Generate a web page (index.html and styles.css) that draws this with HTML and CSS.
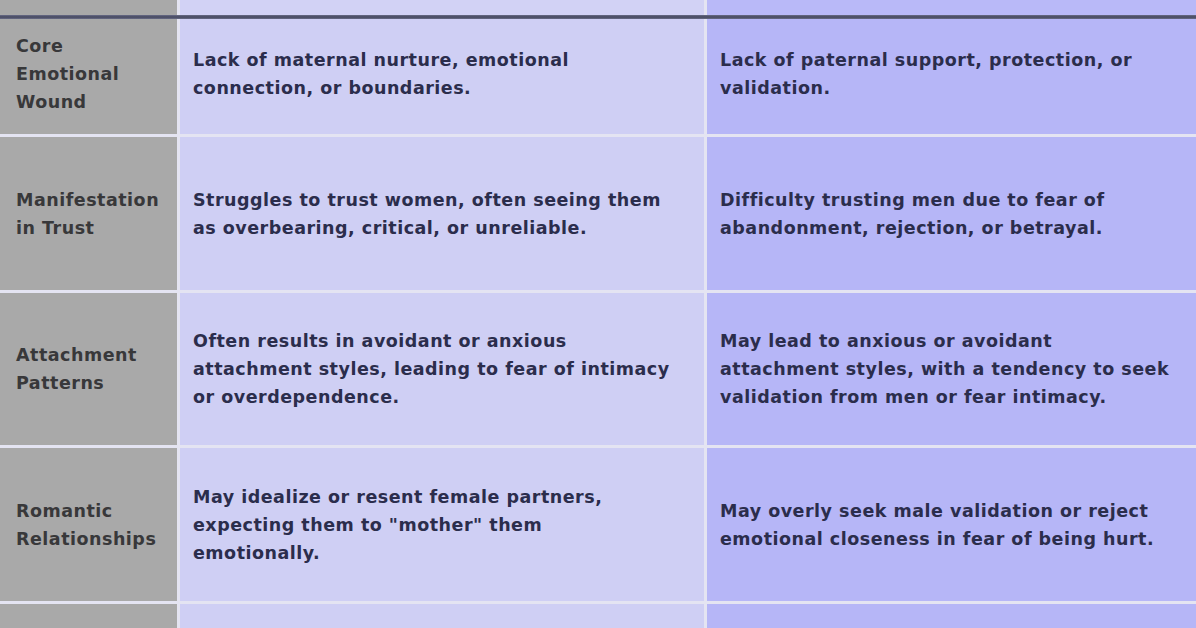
FILE: index.html
```html
<!DOCTYPE html>
<html lang="en">
<head>
<meta charset="utf-8">
<title>Mother and Father Wounds</title>
<link rel="stylesheet" href="styles.css">
</head>
<body>
<div class="table">
  <div class="row head">
    <div class="cell label"></div>
    <div class="cell mother"></div>
    <div class="cell father"></div>
  </div>
  <div class="rule"></div>
  <div class="body">
    <div class="row r1">
      <div class="cell label"><p>Core<br>Emotional<br>Wound</p></div>
      <div class="cell mother"><p>Lack of maternal nurture, emotional<br>connection, or boundaries.</p></div>
      <div class="cell father"><p>Lack of paternal support, protection, or<br>validation.</p></div>
    </div>
    <div class="row r2">
      <div class="cell label"><p>Manifestation<br>in Trust</p></div>
      <div class="cell mother"><p>Struggles to trust women, often seeing them<br>as overbearing, critical, or unreliable.</p></div>
      <div class="cell father"><p>Difficulty trusting men due to fear of<br>abandonment, rejection, or betrayal.</p></div>
    </div>
    <div class="row r3">
      <div class="cell label"><p>Attachment<br>Patterns</p></div>
      <div class="cell mother"><p>Often results in avoidant or anxious<br>attachment styles, leading to fear of intimacy<br>or overdependence.</p></div>
      <div class="cell father"><p>May lead to anxious or avoidant<br>attachment styles, with a tendency to seek<br>validation from men or fear intimacy.</p></div>
    </div>
    <div class="row r4">
      <div class="cell label"><p>Romantic<br>Relationships</p></div>
      <div class="cell mother"><p>May idealize or resent female partners,<br>expecting them to "mother" them<br>emotionally.</p></div>
      <div class="cell father"><p>May overly seek male validation or reject<br>emotional closeness in fear of being hurt.</p></div>
    </div>
    <div class="row r5">
      <div class="cell label"></div>
      <div class="cell mother"></div>
      <div class="cell father"></div>
    </div>
  </div>
</div>
</body>
</html>
```
FILE: styles.css
```css
html, body {
  margin: 0;
  padding: 0;
}
body {
  width: 1196px;
  height: 628px;
  overflow: hidden;
  background: #e4e4f2;
  font-family: "DejaVu Sans", "Liberation Sans", sans-serif;
  font-weight: 700;
}
.table {
  display: flex;
  flex-direction: column;
  width: 1196px;
  height: 628px;
  overflow: hidden;
  background: #e4e4f2;
}
.row {
  display: grid;
  grid-template-columns: 177px 524px 489px;
  column-gap: 3px;
  flex-shrink: 0;
}
.head {
  height: 15px;
}
.rule {
  flex-shrink: 0;
  height: 4px;
  background: linear-gradient(#6a6d88, #45485f 50%, #6a6d88);
}
.body {
  display: flex;
  flex-direction: column;
  row-gap: 3px;
  flex-shrink: 0;
}
.r1 { height: 115px; }
.r2 { height: 153px; }
.r3 { height: 152px; }
.r4 { height: 153px; }
.r5 { height: 60px; }
.r1 .cell {
  padding-bottom: 6px;
}
.cell {
  display: flex;
  align-items: center;
}
.cell p {
  margin: 0;
  font-size: 17.5px;
  line-height: 28px;
  white-space: nowrap;
  letter-spacing: 0.5px;
}
.label {
  background: #a9a9a9;
  padding-left: 16px;
}
.label p {
  color: #38383a;
}
.mother {
  background: #cfcff4;
  padding-left: 13px;
}
.father {
  background: #b6b6f7;
  padding-left: 13px;
}
.mother p, .father p {
  color: #2b2d4c;
}
.head .mother { background: #d2d2f5; }
.head .father { background: #b9b9f8; }
```
